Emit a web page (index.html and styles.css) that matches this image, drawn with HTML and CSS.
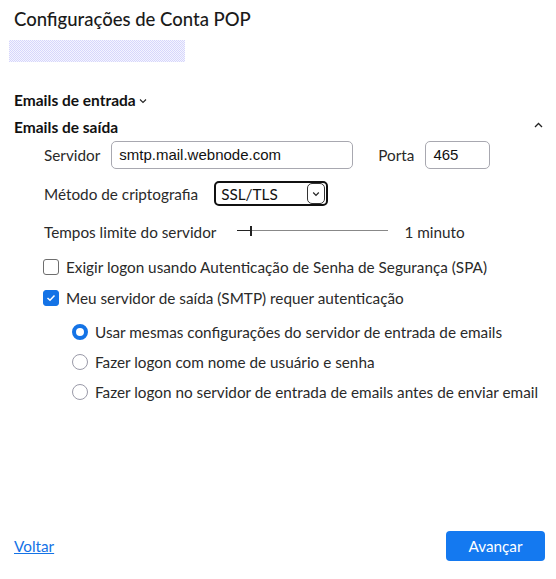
FILE: index.html
```html
<!DOCTYPE html>
<html lang="pt">
<head>
<meta charset="utf-8">
<title>Configurações de Conta POP</title>
<link rel="stylesheet" href="styles.css">
</head>
<body>
<div class="page">
  <h1 class="title">Configurações de Conta POP</h1>
  <div class="blur-bar"></div>

  <div class="section-head closed">
    <span>Emails de entrada</span>
    <svg class="chev-small" width="8" height="6" viewBox="0 0 8 6"><path d="M1 1.5 L4 4.5 L7 1.5" fill="none" stroke="#222" stroke-width="1.1"/></svg>
  </div>
  <div class="section-head open">
    <span>Emails de saída</span>
    <svg class="chev-up" width="9" height="6" viewBox="0 0 9 6"><path d="M1 5 L4.5 1.5 L8 5" fill="none" stroke="#222" stroke-width="1.3"/></svg>
  </div>

  <div class="section-body">
    <div class="row server-row">
      <span class="label">Servidor</span>
      <div class="input server-input">smtp.mail.webnode.com</div>
      <span class="label porta">Porta</span>
      <div class="input port-input">465</div>
    </div>

    <div class="row crypt-row">
      <span class="label">Método de criptografia</span>
      <div class="select">
        <span>SSL/TLS</span>
        <span class="select-btn"><svg width="8" height="6" viewBox="0 0 8 6"><path d="M1.2 1.5 L4 4.3 L6.8 1.5" fill="none" stroke="#222" stroke-width="1.2"/></svg></span>
      </div>
    </div>

    <div class="row timeout-row">
      <span class="label">Tempos limite do servidor</span>
      <div class="slider"><div class="slider-fill"></div><div class="slider-thumb"></div><div class="slider-track"></div></div>
      <span class="label minute">1 minuto</span>
    </div>

    <div class="check-row">
      <span class="checkbox"></span>
      <span class="label">Exigir logon usando Autenticação de Senha de Segurança (SPA)</span>
    </div>
    <div class="check-row">
      <span class="checkbox checked"><svg width="10" height="8" viewBox="0 0 10 8"><path d="M1.5 4 L4 6.3 L8.5 1.5" fill="none" stroke="#fff" stroke-width="1.5"/></svg></span>
      <span class="label">Meu servidor de saída (SMTP) requer autenticação</span>
    </div>

    <div class="radios">
      <div class="radio-row"><span class="radio on"></span><span class="label">Usar mesmas configurações do servidor de entrada de emails</span></div>
      <div class="radio-row"><span class="radio"></span><span class="label">Fazer logon com nome de usuário e senha</span></div>
      <div class="radio-row"><span class="radio"></span><span class="label">Fazer logon no servidor de entrada de emails antes de enviar email</span></div>
    </div>
  </div>

  <div class="footer">
    <a class="back" href="#">Voltar</a>
    <button class="next">Avançar</button>
  </div>
</div>
</body>
</html>
```

FILE: styles.css
```css
* { box-sizing: border-box; }
html, body { margin: 0; padding: 0; background: #fff; }
body {
  font-family: Lato, "Noto Sans", sans-serif;
  color: #1f1f1f;
  font-size: 15.3px;
  line-height: 20px;
}
.page {
  width: 556px;
  height: 579px;
  padding: 6px 11px 0 14px;
  display: flex;
  flex-direction: column;
}
.title {
  margin: 0;
  font-size: 18.5px;
  font-weight: 500;
  line-height: 26px;
  color: #1a1a1a;
}
.blur-bar {
  margin: 8px 0 0 -5px;
  width: 176px;
  height: 22px;
  background-color: #fff;
  background-image: repeating-conic-gradient(#d6d6fb 0 25%, #f4f4ff 0 50%);
  background-size: 2px 2px;
}
.section-head {
  display: flex;
  align-items: center;
  font-weight: 700;
  font-size: 15.5px;
  line-height: 20px;
  color: #111;
}
.section-head.closed { margin-top: 28px; }
.section-head.open { margin-top: 7px; justify-content: space-between; }
.chev-small { margin-left: 3px; margin-top: 2px; }
.chev-up { margin-right: 2px; margin-top: -4px; }
.section-body {
  padding-left: 30px;
  display: flex;
  flex-direction: column;
}
.row { display: flex; align-items: center; }
.label { color: #2a2a2a; white-space: nowrap; }
.server-row { margin-top: 4px; }
.input {
  height: 28px;
  border: 1px solid #a8a8b0;
  border-radius: 5px;
  font-family: "Liberation Sans", Arial, sans-serif;
  font-size: 15px;
  color: #111;
  display: flex;
  align-items: center;
  padding-left: 7px;
}
.server-input { width: 242px; margin-left: 11px; }
.porta { margin-left: 25px; }
.port-input { width: 65px; margin-left: 11px; }
.crypt-row { margin-top: 12px; }
.select {
  margin-left: 16px;
  width: 114px;
  height: 25px;
  border: 2px solid #111;
  border-radius: 5px;
  display: flex;
  align-items: center;
  justify-content: space-between;
  padding-left: 5px;
  padding-right: 1px;
  color: #111;
}
.select-btn {
  width: 18px;
  height: 21px;
  border: 1px solid #333;
  border-radius: 5px;
  display: flex;
  align-items: center;
  justify-content: center;
}
.timeout-row { margin-top: 16px; }
.slider {
  position: relative;
  width: 151px;
  height: 12px;
  margin-left: 21px;
  margin-top: -2px;
}
.slider-fill {
  position: absolute;
  left: 0; top: 5px;
  width: 14px; height: 1px;
  background: #222;
}
.slider-thumb {
  position: absolute;
  left: 13px; top: 1px;
  width: 2px; height: 10px;
  background: #222;
}
.slider-track {
  position: absolute;
  left: 15px; right: 0; top: 5px;
  height: 1px;
  background: #888;
}
.minute { margin-left: 16px; }
.check-row {
  display: flex;
  align-items: center;
  margin-left: -1px;
  margin-top: 15px;
}
.check-row + .check-row { margin-top: 11px; }
.checkbox {
  width: 16px; height: 16px;
  border: 1px solid #6e6e6e;
  border-radius: 3px;
  margin-right: 7px;
  display: flex;
  align-items: center;
  justify-content: center;
}
.checkbox.checked { background: #1473e6; border-color: #1473e6; }
.radios {
  padding-left: 28px;
  display: flex;
  flex-direction: column;
  margin-top: 14px;
}
.radio-row {
  display: flex;
  align-items: center;
  height: 20px;
}
.radio-row + .radio-row { margin-top: 10px; }
.radio {
  width: 16px; height: 16px;
  border-radius: 50%;
  border: 1px solid #9a9aa8;
  margin-right: 7px;
  flex: none;
}
.radio.on { border: 4px solid #1473e6; }
.footer {
  margin-top: auto;
  margin-bottom: 18px;
  display: flex;
  justify-content: space-between;
  align-items: center;
}
.back {
  color: #1473e6;
  text-decoration: underline;
}
.next {
  width: 99px;
  height: 30px;
  border: none;
  border-radius: 4px;
  background: #1479f0;
  color: #fff;
  font-family: Lato, "Noto Sans", sans-serif;
  font-size: 15.3px;
}
```
